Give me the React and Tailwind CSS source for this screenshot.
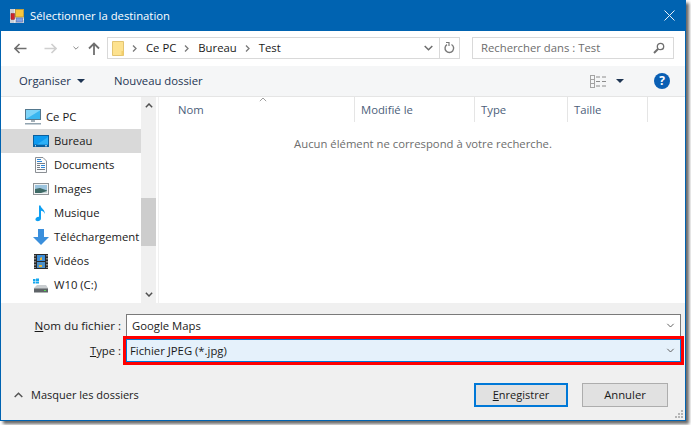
import React from "react";

const Chevron = ({ dir = "down", color = "#6d6d6d", w = 9, h = 6, sw = 1.5 }) => (
  <svg width={w} height={h} viewBox="0 0 9 6" fill="none" className="shrink-0">
    <path d={dir === "down" ? "M0.7 1 L4.5 4.8 L8.3 1" : "M0.7 5 L4.5 1.2 L8.3 5"} stroke={color} strokeWidth={sw} />
  </svg>
);

const Crumb = () => (
  <svg width="5" height="7" viewBox="0 0 5 7" className="shrink-0 ml-[8px] mr-[9px]"><path d="M1 0.5 L4 3.5 L1 6.5" stroke="#7a7a7a" strokeWidth="1.3" fill="none" /></svg>
);

const Caret = ({ color = "#1e3553" }) => (
  <svg width="8" height="4" viewBox="0 0 8 4"><path d="M0 0 H8 L4 4 Z" fill={color} /></svg>
);

const AppIcon = () => (
  <svg width="14" height="14" viewBox="0 0 14 14" className="shrink-0">
    <rect x="0" y="0" width="14" height="14" fill="#c9ced6" />
    <path d="M4.5 0 V14 M0 4.5 H14 M0 10.5 H14" stroke="#eef1f5" strokeWidth="0.7" />
    <rect x="1" y="4.5" width="3.5" height="6" fill="#d2232a" stroke="#7d1a1d" strokeWidth="0.5" />
    <rect x="5.5" y="0.5" width="8" height="7.5" fill="#f6c63e" stroke="#b08a22" strokeWidth="0.7" />
    <rect x="6.5" y="9" width="6" height="4" fill="#7fa0e4" stroke="#5472b4" strokeWidth="0.6" />
  </svg>
);

const NavIcon = ({ kind }) => {
  switch (kind) {
    case "pc":
      return (
        <svg width="16" height="16" viewBox="0 0 16 16">
          <rect x="0.5" y="0.5" width="15" height="10" fill="#39b6f0" stroke="#54788e" />
          <path d="M1 10 L15 1.5 V1 H1 Z" fill="#7fd4f8" />
          <rect x="6" y="11" width="4" height="2" fill="#a4b0b8" />
          <rect x="0" y="14" width="16" height="1.5" fill="#92a4b0" />
        </svg>
      );
    case "desk":
      return (
        <svg width="16" height="12" viewBox="0 0 16 12">
          <rect x="0" y="0" width="16" height="12" fill="#0a5f9e" />
          <rect x="1" y="1" width="14" height="8.5" fill="#0d9af0" />
          <path d="M4 9.5 L15 2 V9.5 Z" fill="#2db0f7" />
          <rect x="2" y="10.3" width="1" height="1" fill="#ffffff" />
          <rect x="12" y="10.3" width="2" height="1" fill="#cfe9fb" />
        </svg>
      );
    case "doc":
      return (
        <svg width="12" height="16" viewBox="0 0 12 16">
          <path d="M0.5 0.5 H8 L11.5 4 V15.5 H0.5 Z" fill="#fafbfc" stroke="#8b8f94" />
          <path d="M2 2.5 H6 M2 4.5 H7" stroke="#2f86d6" strokeWidth="1" />
          <path d="M2 6.5 H10" stroke="#767d85" strokeWidth="1" />
          <path d="M2 8.5 H5 M2 10.5 H5 M2 12.5 H10" stroke="#767d85" strokeWidth="1" />
          <path d="M6 8.5 H10 M6 10.5 H10" stroke="#2f86d6" strokeWidth="1" />
        </svg>
      );
    case "img":
      return (
        <svg width="16" height="12" viewBox="0 0 16 12">
          <rect x="0.5" y="0.5" width="15" height="11" fill="#f2f4f5" stroke="#8f9396" />
          <rect x="2" y="2" width="12" height="8" fill="#9cc4de" />
          <path d="M2 6 L7 5 L14 7.5 V10 H2 Z" fill="#3e6a66" />
          <path d="M8 10 L14 8 V10 Z" fill="#c7d6d8" />
        </svg>
      );
    case "music":
      return (
        <svg width="11" height="17" viewBox="0 0 11 16">
          <path d="M4 0 H5.5 C6 3 10 4 10 8.5 C9 6 7.5 5.5 6 5.3 V13 C6 15 3.5 16 1.8 15.6 C0 15 0 13 1.5 12 C2.3 11.4 3.3 11.2 4 11.4 Z" fill="#0e9ff2" />
        </svg>
      );
    case "down":
      return (
        <svg width="16" height="16" viewBox="0 0 16 16">
          <path d="M5 0 H11 V8 H16 L8 16 L0 8 H5 Z" fill="#3b8fdc" />
        </svg>
      );
    case "video":
      return (
        <svg width="14" height="15" viewBox="0 0 14 15">
          <rect width="14" height="15" fill="#2a2a2a" />
          <rect x="3" y="1" width="8" height="6" fill="#3d8ed8" />
          <rect x="3" y="8" width="8" height="6" fill="#4a8fc9" />
          <path d="M6 4 L8 3 V6 H6 Z M5 11 H8 V13 H5 Z" fill="#e5b53a" />
          <path d="M1 1 V14 M13 1 V14" stroke="#dcdcdc" strokeWidth="1" strokeDasharray="1.5 1.5" />
        </svg>
      );
    case "drive":
      return (
        <svg width="15" height="15" viewBox="0 0 15 15">
          <path d="M0 1 H2.5 V3 H0 Z M3 0.5 H6 V3 H3 Z M0 3.5 H2.5 V5.5 H0 Z M3 3.5 H6 V5.5 H3 Z" fill="#14a7ee" />
          <path d="M2 9 L4 7 H13 L15 10 V14 H1 V10 Z" fill="#c9cdd0" />
          <rect x="1" y="10.5" width="14" height="4" fill="#5f6468" />
          <rect x="11" y="12" width="2" height="1" fill="#4fe04f" />
        </svg>
      );
    default:
      return null;
  }
};

const navItems = [
  { label: "Bureau", kind: "desk", selected: true },
  { label: "Documents", kind: "doc" },
  { label: "Images", kind: "img" },
  { label: "Musique", kind: "music" },
  { label: "Téléchargement", kind: "down" },
  { label: "Vidéos", kind: "video" },
  { label: "W10 (C:)", kind: "drive" },
];

const columns = [
  { label: "Modifié le", w: "w-[120px]" },
  { label: "Type", w: "w-[93px]" },
  { label: "Taille", w: "w-[80px]" },
];

export default function App() {
  return (
    <div className="w-[691px] h-[425px] bg-white overflow-hidden font-['Open_Sans','Noto_Sans',sans-serif] text-[11.3px] leading-[16px] text-[#1a1a1a]">
      <div className="w-[686px] h-[421px] border-x border-b border-[#0063b1] flex flex-col shadow-[3px_3px_3px_rgba(0,0,0,0.6)]">
        {/* title bar */}
        <div className="h-[31px] shrink-0 bg-[#0063b1] flex items-center pl-[9px] pr-[10px] text-white">
          <AppIcon />
          <span className="ml-[6px] flex-1">Sélectionner la destination</span>
          <svg width="11" height="11" viewBox="0 0 11 11"><path d="M0.5 0.5 L10.5 10.5 M10.5 0.5 L0.5 10.5" stroke="#e8f1f8" strokeWidth="1" /></svg>
        </div>

        {/* address bar */}
        <div className="h-[35px] shrink-0 bg-white flex items-center pb-[1px]">
          <div className="w-[106px] shrink-0 flex items-center pl-[13px]">
            <svg width="13" height="11" viewBox="0 0 13 11"><path d="M12.5 5.5 H1.5 M5.5 1 L1 5.5 L5.5 10" stroke="#6f6f6f" strokeWidth="1.6" fill="none" /></svg>
            <svg width="13" height="11" viewBox="0 0 13 11" className="ml-[17px]"><path d="M0.5 5.5 H11.5 M7.5 1 L12 5.5 L7.5 10" stroke="#cfcfcf" strokeWidth="1.6" fill="none" /></svg>
            <span className="ml-[16px]"><Chevron w={6} h={4} color="#8a8a8a" /></span>
            <svg width="12" height="13" viewBox="0 0 12 13" className="ml-[9px]"><path d="M6 13 V2 M1 6.5 L6 1.5 L11 6.5" stroke="#6f6f6f" strokeWidth="1.8" fill="none" /></svg>
          </div>
          <div className="w-[353px] h-[22px] shrink-0 border border-[#d9d9d9] flex items-center pl-[4px]">
            <svg width="12" height="15" viewBox="0 0 12 15" className="shrink-0">
              <path d="M0.5 0.5 H11.5 V14.5 H0.5 Z" fill="#fde28f" stroke="#e3c471" />
              <rect x="9.5" y="10" width="2" height="4.5" fill="#f2ce6d" />
            </svg>
            <Crumb />
            <span>Ce PC</span>
            <Crumb />
            <span>Bureau</span>
            <Crumb />
            <span>Test</span>
            <div className="flex-1 flex justify-end pr-[6px]"><Chevron color="#6d6d6d" w={9} h={6} /></div>
            <div className="w-[20px] h-full border-l border-[#d9d9d9] flex items-center justify-center">
              <svg width="11" height="12" viewBox="0 0 11 12" fill="none"><path d="M7.5 2.5 A4.3 4.3 0 1 1 3 2.6" stroke="#7a7a7a" strokeWidth="1.4" /><path d="M2 0.5 L5 0.5 L5 4" stroke="#7a7a7a" strokeWidth="1.2" /></svg>
            </div>
          </div>
          <div className="ml-[12px] w-[202px] h-[22px] shrink-0 border border-[#d9d9d9] flex items-center justify-between pl-[8px] pr-[8px] text-[#6d6d6d]">
            <span>Rechercher dans : Test</span>
            <svg width="12" height="12" viewBox="0 0 12 12" fill="none"><circle cx="7.5" cy="4.5" r="3.2" stroke="#6f6f6f" strokeWidth="1.3" /><path d="M5 7 L1 11" stroke="#6f6f6f" strokeWidth="2" /></svg>
          </div>
        </div>

        {/* toolbar */}
        <div className="h-[31px] shrink-0 bg-[#f5f6f7] border-b border-[#e5e5e5] flex items-center pl-[18px] pr-[15px] text-[#1e3553]">
          <span>Organiser</span>
          <span className="ml-[6px] flex"><Caret /></span>
          <span className="ml-[29px]">Nouveau dossier</span>
          <div className="flex-1" />
          <svg width="16" height="13" viewBox="0 0 16 13" fill="none">
            <rect x="0.5" y="0.5" width="4" height="12" stroke="#a3a3a3" />
            <path d="M0.5 4.5 H4.5 M0.5 8.5 H4.5" stroke="#a3a3a3" />
            <path d="M6 2 H10 M12 2 H16 M6 6.5 H10 M12 6.5 H16 M6 11 H10 M12 11 H16" stroke="#8c8c8c" />
          </svg>
          <span className="ml-[10px] mr-[30px] flex"><Caret /></span>
          <div className="w-[16px] h-[16px] rounded-full bg-[#0a5fb4] text-white flex items-center justify-center text-[12px] font-bold leading-none">?</div>
        </div>

        {/* content */}
        <div className="flex-1 min-h-0 flex bg-white">
          <div className="w-[140px] shrink-0 pt-[8px] flex flex-col">
            <div className="h-[24px] flex items-center pl-[24px]">
              <NavIcon kind="pc" />
              <span className="ml-[5px]">Ce PC</span>
            </div>
            {navItems.map((it) => (
              <div key={it.label} className={`h-[24px] flex items-center whitespace-nowrap ${it.selected ? "bg-[#d9d9d9]" : ""}`}>
                <div className="w-[53px] shrink-0 flex justify-center pl-[26px]"><NavIcon kind={it.kind} /></div>
                <span>{it.label}</span>
              </div>
            ))}
          </div>
          <div className="w-[15px] shrink-0 bg-[#f0f0f0] flex flex-col">
            <div className="h-[17px] flex items-center justify-center"><Chevron dir="up" color="#505050" w={8} h={5} sw={1.8} /></div>
            <div className="h-[84px]" />
            <div className="h-[48px] bg-[#cdcdcd]" />
            <div className="flex-1" />
            <div className="h-[17px] flex items-center justify-center"><Chevron dir="down" color="#505050" w={8} h={5} sw={1.8} /></div>
          </div>
          <div className="flex-1 min-w-0 ml-[2px] border-l border-[#f0f0f0] flex flex-col relative">
            <div className="h-[25px] flex text-[#4c607a]">
              <div className="w-[196px] border-r border-[#e5e5e5] pl-[19px] pt-[5px] relative">
                <span>Nom</span>
                <span className="absolute left-[100px] top-[0px] flex"><Chevron dir="up" color="#8a8a8a" w={8} h={5} sw={1} /></span>
              </div>
              {columns.map((c) => (
                <div key={c.label} className={`${c.w} border-r border-[#e5e5e5] pl-[6px] pt-[5px]`}>{c.label}</div>
              ))}
            </div>
            <div className="text-center text-[#6d6d6d] pt-[14px] pl-[2px]">Aucun élément ne correspond à votre recherche.</div>
          </div>
        </div>

        {/* footer */}
        <div className="h-[117px] shrink-0 bg-[#f0f0f0] flex flex-col relative">
          <div className="flex items-center h-[23px] mt-[11px]">
            <div className="w-[125px] text-right pr-[5px] shrink-0 text-[11.6px]"><span className="underline">N</span>om du fichier :</div>
            <div className="w-[555px] h-[23px] bg-white border border-[#7a7a7a] flex items-center justify-between pl-[5px] pr-[5px]">
              <span>Google Maps</span>
              <Chevron color="#555" w={9} h={5} sw={1.1} />
            </div>
          </div>
          <div className="flex items-center h-[23px] mt-[2px]">
            <div className="w-[125px] text-right pr-[5px] shrink-0"><span className="underline">T</span>ype :</div>
            <div className="w-[555px] h-[23px] bg-[#e5f1fb] border border-[#0078d7] outline-[3px] outline-[#ff0000] flex items-center justify-between pl-[3px] pr-[5px]">
              <span>Fichier JPEG (*.jpg)</span>
              <Chevron color="#555" w={9} h={5} sw={1.1} />
            </div>
          </div>
          <div className="flex items-center mt-[21px] pl-[13px] pr-[17px]">
            <Chevron dir="up" color="#555" w={9} h={6} sw={1.5} />
            <span className="ml-[8px] text-[11px]">Masquer les dossiers</span>
            <div className="flex-1" />
            <button className="w-[94px] h-[24px] bg-[#e1e1e1] border-2 border-[#0078d7] mr-[14px] text-[11px]"><span className="underline">E</span>nregistrer</button>
            <button className="w-[86px] h-[24px] bg-[#e1e1e1] border border-[#adadad]">Annuler</button>
          </div>
          <svg width="9" height="9" viewBox="0 0 9 9" className="absolute right-[1px] bottom-[1px]" fill="#b5b5b5">
            <rect x="6" y="0" width="2" height="2" /><rect x="3" y="3" width="2" height="2" /><rect x="6" y="3" width="2" height="2" /><rect x="0" y="6" width="2" height="2" /><rect x="3" y="6" width="2" height="2" /><rect x="6" y="6" width="2" height="2" />
          </svg>
        </div>
      </div>
    </div>
  );
}
